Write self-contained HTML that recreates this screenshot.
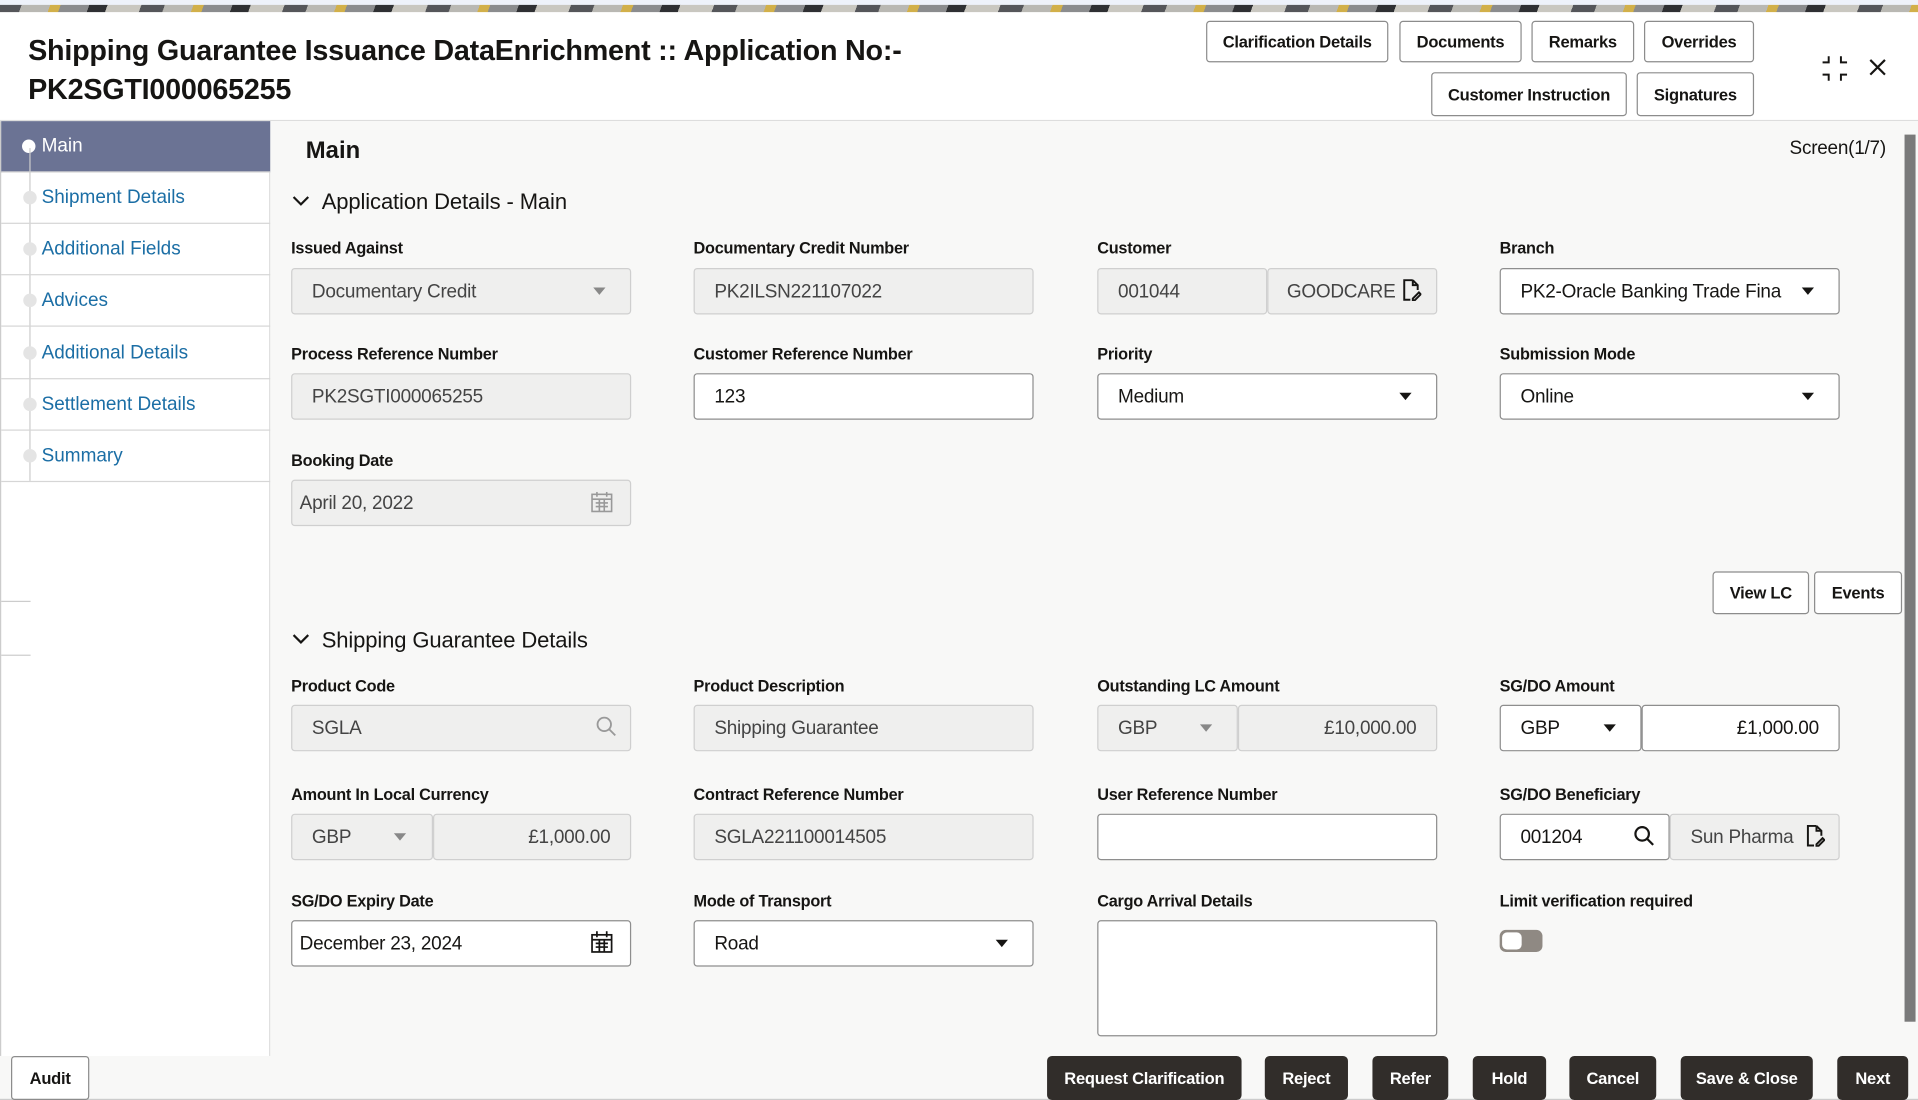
<!DOCTYPE html>
<html><head><meta charset="utf-8"><style>
*{box-sizing:border-box;margin:0;padding:0}
html,body{width:1918px;height:1100px;overflow:hidden;background:#fff;font-family:"Liberation Sans",sans-serif;color:#161513}
#w{position:absolute;left:0;top:0;width:1568px;height:899px;transform:scale(1.22321,1.2236);transform-origin:0 0}
.a{position:absolute}
.top{left:0;top:0;width:1568px;height:10px;background:repeating-linear-gradient(110deg,#55565a 0 18px,#b9b8b3 18px 40px,#d2b04a 40px 48px,#8b8c8e 48px 70px,#2f3033 70px 84px,#c9c7c0 84px 110px);}
.top2{left:0;top:0;width:1568px;height:4px;background:#eef2fa}
.btn{position:absolute;border:1px solid #8c8c8c;border-radius:3px;background:#fff;font-size:13.5px;font-weight:bold;display:flex;align-items:center;justify-content:center;letter-spacing:-.2px}
.dk{position:absolute;top:863px;height:36px;background:#312d2a;color:#fff;border-radius:4px;font-size:13.5px;font-weight:bold;display:flex;align-items:center;justify-content:center;letter-spacing:-.2px}
.side{left:0;top:99px;width:221px;height:764px;background:#fff;border-right:1px solid #ddd;border-left:1px solid #ccc}
.it{position:absolute;left:0;width:220px;height:42px;border-bottom:1px solid #d6d6d6;font-size:15.5px;color:#1b6ea5;padding:12px 0 0 33px}
.dot{position:absolute;left:18px;top:15px;width:11px;height:11px;border-radius:50%;background:#e4e4e4}
.vl{position:absolute;left:23px;width:1px;background:#ccc}
.main{left:221px;top:99px;width:1347px;height:764px;background:#f8f8f7}
.lb{position:absolute;font-size:13.3px;font-weight:bold;letter-spacing:-.2px}
.in{position:absolute;height:38px;border:1px solid #8e8e8e;border-radius:3px;background:#fff;font-size:15.5px;padding:10px 0 0 16px;white-space:nowrap;overflow:hidden;letter-spacing:-.2px}
.ro{background:#efefee;border-color:#cfcfcf;color:#444}
.car{position:absolute;width:0;height:0;border-left:5px solid transparent;border-right:5px solid transparent;border-top:6px solid #161513}
.car.g{border-top-color:#888}
.sec{position:absolute;font-size:18px;letter-spacing:-.1px}
</style></head><body><div id="w">
<div class="a top"></div><div class="a top2"></div>
<div class="a" style="left:0;top:10px;width:1568px;height:89px;background:#fff;border-bottom:1px solid #ddd"></div>
<div class="a" style="left:23px;top:25px;font-size:23.5px;font-weight:bold;letter-spacing:-.2px;line-height:32px">Shipping Guarantee Issuance DataEnrichment :: Application No:-<br>PK2SGTI000065255</div>
<div class="btn" style="left:986px;top:17px;width:149px;height:34px">Clarification Details</div>
<div class="btn" style="left:1144px;top:17px;width:100px;height:34px">Documents</div>
<div class="btn" style="left:1252px;top:17px;width:84px;height:34px">Remarks</div>
<div class="btn" style="left:1344px;top:17px;width:90px;height:34px">Overrides</div>
<div class="btn" style="left:1170px;top:59px;width:160px;height:36px">Customer Instruction</div>
<div class="btn" style="left:1338px;top:59px;width:96px;height:36px">Signatures</div>
<svg class="a" style="left:1488px;top:44px" width="24" height="24" viewBox="0 0 24 24" fill="none" stroke="#161513" stroke-width="1.6"><path d="M7 2v5H2M17 2v5h5M7 22v-5H2M17 22v-5h5"/></svg>
<svg class="a" style="left:1527px;top:47px" width="16" height="16" viewBox="0 0 16 16" stroke="#161513" stroke-width="1.8"><path d="M2 2l12 12M14 2L2 14"/></svg>

<div class="a side">
<div class="it" style="top:0;background:#6b7394;color:#fff">Main<div class="dot" style="background:#fff;left:17px"></div></div>
<div class="vl" style="top:22px;height:272px"></div>
<div class="it" style="top:42px">Shipment Details<div class="dot"></div></div>
<div class="it" style="top:84px">Additional Fields<div class="dot"></div></div>
<div class="it" style="top:126px">Advices<div class="dot"></div></div>
<div class="it" style="top:169px">Additional Details<div class="dot"></div></div>
<div class="it" style="top:211px">Settlement Details<div class="dot"></div></div>
<div class="it" style="top:253px">Summary<div class="dot"></div></div>
<div class="a" style="left:0;top:392px;width:24px;height:1px;background:#ccc"></div>
<div class="a" style="left:0;top:436px;width:24px;height:1px;background:#ccc"></div>
</div>

<div class="a main"></div>
<div class="a" style="left:250px;top:112px;font-size:19.5px;font-weight:bold">Main</div>
<div class="a" style="left:1463px;top:113px;font-size:15.5px;letter-spacing:-.2px">Screen(1/7)</div>
<div class="a" style="left:1557px;top:110px;width:9px;height:725px;background:#7a7a7a"></div>

<svg class="a" style="left:239px;top:159px" width="14" height="10" viewBox="0 0 14 10" fill="none" stroke="#161513" stroke-width="1.8"><path d="M1 2l6 6 6-6"/></svg>
<div class="sec" style="left:263px;top:155px">Application Details - Main</div>

<div class="lb" style="left:238px;top:195px">Issued Against</div>
<div class="in ro" style="left:238px;top:219px;width:278px">Documentary Credit</div><div class="car g" style="left:485px;top:235px"></div>
<div class="lb" style="left:567px;top:195px">Documentary Credit Number</div>
<div class="in ro" style="left:567px;top:219px;width:278px">PK2ILSN221107022</div>
<div class="lb" style="left:897px;top:195px">Customer</div>
<div class="in ro" style="left:897px;top:219px;width:139px">001044</div>
<div class="in ro" style="left:1036px;top:219px;width:139px;padding-left:15px">GOODCARE</div>
<svg class="a" style="left:1146px;top:228px" width="16" height="18" viewBox="0 0 16 18" fill="none" stroke="#161513" stroke-width="1.6"><path d="M9 1H2v16h5M9 1l4 4v4M9 1v4h4M9 16l5-5 1.5 1.5-5 5H9z"/></svg>
<div class="lb" style="left:1226px;top:195px">Branch</div>
<div class="in" style="left:1226px;top:219px;width:278px;padding-right:40px">PK2-Oracle Banking Trade Fina</div><div class="a" style="left:1460px;top:221px;width:40px;height:34px;background:#fff"></div><div class="car" style="left:1473px;top:235px"></div>

<div class="lb" style="left:238px;top:282px">Process Reference Number</div>
<div class="in ro" style="left:238px;top:305px;width:278px">PK2SGTI000065255</div>
<div class="lb" style="left:567px;top:282px">Customer Reference Number</div>
<div class="in" style="left:567px;top:305px;width:278px">123</div>
<div class="lb" style="left:897px;top:282px">Priority</div>
<div class="in" style="left:897px;top:305px;width:278px">Medium</div><div class="car" style="left:1144px;top:321px"></div>
<div class="lb" style="left:1226px;top:282px">Submission Mode</div>
<div class="in" style="left:1226px;top:305px;width:278px">Online</div><div class="car" style="left:1473px;top:321px"></div>

<div class="lb" style="left:238px;top:369px">Booking Date</div>
<div class="in ro" style="left:238px;top:392px;width:278px;padding-left:6px">April 20, 2022</div>
<svg class="a" style="left:483px;top:402px" width="18" height="17" viewBox="0 0 18 17" fill="none" stroke="#999" stroke-width="1.3"><rect x="1" y="2" width="16" height="14"/><path d="M1 6h16M5 0v4M13 0v4M4 9h10M4 12h10M7 6v10M11 6v10"/></svg>

<div class="btn" style="left:1400px;top:467px;width:79px;height:35px">View LC</div>
<div class="btn" style="left:1483px;top:467px;width:72px;height:35px">Events</div>

<svg class="a" style="left:239px;top:517px" width="14" height="10" viewBox="0 0 14 10" fill="none" stroke="#161513" stroke-width="1.8"><path d="M1 2l6 6 6-6"/></svg>
<div class="sec" style="left:263px;top:513px">Shipping Guarantee Details</div>

<div class="lb" style="left:238px;top:553px">Product Code</div>
<div class="in ro" style="left:238px;top:576px;width:278px">SGLA</div>
<svg class="a" style="left:487px;top:585px" width="17" height="17" viewBox="0 0 17 17" fill="none" stroke="#999" stroke-width="1.5"><circle cx="7" cy="7" r="5.5"/><path d="M11 11l5 5"/></svg>
<div class="lb" style="left:567px;top:553px">Product Description</div>
<div class="in ro" style="left:567px;top:576px;width:278px">Shipping Guarantee</div>
<div class="lb" style="left:897px;top:553px">Outstanding LC Amount</div>
<div class="in ro" style="left:897px;top:576px;width:115px">GBP</div><div class="car g" style="left:981px;top:592px"></div>
<div class="in ro" style="left:1012px;top:576px;width:163px;text-align:right;padding:10px 16px 0 0">£10,000.00</div>
<div class="lb" style="left:1226px;top:553px">SG/DO Amount</div>
<div class="in" style="left:1226px;top:576px;width:116px">GBP</div><div class="car" style="left:1311px;top:592px"></div>
<div class="in" style="left:1342px;top:576px;width:162px;text-align:right;padding:10px 16px 0 0">£1,000.00</div>

<div class="lb" style="left:238px;top:642px">Amount In Local Currency</div>
<div class="in ro" style="left:238px;top:665px;width:116px">GBP</div><div class="car g" style="left:322px;top:681px"></div>
<div class="in ro" style="left:354px;top:665px;width:162px;text-align:right;padding:10px 16px 0 0">£1,000.00</div>
<div class="lb" style="left:567px;top:642px">Contract Reference Number</div>
<div class="in ro" style="left:567px;top:665px;width:278px">SGLA221100014505</div>
<div class="lb" style="left:897px;top:642px">User Reference Number</div>
<div class="in" style="left:897px;top:665px;width:278px"></div>
<div class="lb" style="left:1226px;top:642px">SG/DO Beneficiary</div>
<div class="in" style="left:1226px;top:665px;width:139px">001204</div>
<svg class="a" style="left:1335px;top:674px" width="18" height="18" viewBox="0 0 18 18" fill="none" stroke="#161513" stroke-width="1.8"><circle cx="7.5" cy="7.5" r="5.5"/><path d="M11.5 11.5l5 5"/></svg>
<div class="in ro" style="left:1365px;top:665px;width:139px;padding-right:40px">Sun Pharma</div>
<svg class="a" style="left:1476px;top:674px" width="16" height="18" viewBox="0 0 16 18" fill="none" stroke="#161513" stroke-width="1.6"><path d="M9 1H2v16h5M9 1l4 4v4M9 1v4h4M9 16l5-5 1.5 1.5-5 5H9z"/></svg>

<div class="lb" style="left:238px;top:729px">SG/DO Expiry Date</div>
<div class="in" style="left:238px;top:752px;width:278px;padding-left:6px">December 23, 2024</div>
<svg class="a" style="left:483px;top:761px" width="18" height="18" viewBox="0 0 18 18" fill="none" stroke="#161513" stroke-width="1.4"><rect x="1" y="3" width="16" height="14"/><path d="M1 7h16M5 0v5M13 0v5M4 10h10M4 13h10M7 7v10M11 7v10"/></svg>
<div class="lb" style="left:567px;top:729px">Mode of Transport</div>
<div class="in" style="left:567px;top:752px;width:278px">Road</div><div class="car" style="left:814px;top:768px"></div>
<div class="lb" style="left:897px;top:729px">Cargo Arrival Details</div>
<div class="in" style="left:897px;top:752px;width:278px;height:95px"></div>
<div class="lb" style="left:1226px;top:729px">Limit verification required</div>
<div class="a" style="left:1226px;top:760px;width:35px;height:18px;border-radius:5px;background:#8f8983"></div>
<div class="a" style="left:1228px;top:762px;width:16px;height:14px;border-radius:4px;background:#fff"></div>

<div class="a" style="left:0;top:863px;width:1568px;height:36px;background:#f8f8f7;border-bottom:1px solid #ccc"></div>
<div class="btn" style="left:9px;top:863px;width:64px;height:36px">Audit</div>
<div class="dk" style="left:856px;width:159px">Request Clarification</div>
<div class="dk" style="left:1034px;width:68px">Reject</div>
<div class="dk" style="left:1122px;width:62px">Refer</div>
<div class="dk" style="left:1204px;width:60px">Hold</div>
<div class="dk" style="left:1283px;width:71px">Cancel</div>
<div class="dk" style="left:1374px;width:108px">Save &amp; Close</div>
<div class="dk" style="left:1502px;width:58px">Next</div>
</div></body></html>
